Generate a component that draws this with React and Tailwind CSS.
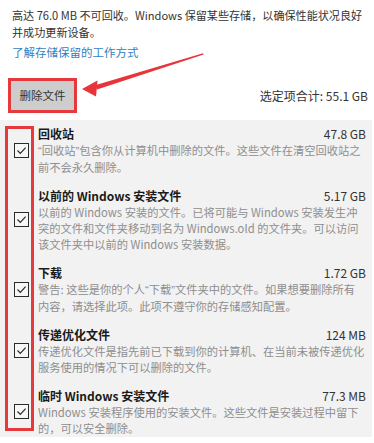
import React from "react";

const items = [
  {
    title: "回收站",
    size: "47.8 GB",
    lines: [
      "“回收站”包含你从计算机中删除的文件。这些文件在清空回收站之",
      "前不会永久删除。",
    ],
  },
  {
    title: "以前的 Windows 安装文件",
    size: "5.17 GB",
    lines: [
      "以前的 Windows 安装的文件。已将可能与 Windows 安装发生冲",
      "突的文件和文件夹移动到名为 Windows.old 的文件夹。可以访问",
      "该文件夹中以前的 Windows 安装数据。",
    ],
  },
  {
    title: "下载",
    size: "1.72 GB",
    lines: [
      "警告: 这些是你的个人“下载”文件夹中的文件。如果想要删除所有",
      "内容，请选择此项。此项不遵守你的存储感知配置。",
    ],
  },
  {
    title: "传递优化文件",
    size: "124 MB",
    lines: [
      "传递优化文件是指先前已下载到你的计算机、在当前未被传递优化",
      "服务使用的情况下可以删除的文件。",
    ],
  },
  {
    title: "临时 Windows 安装文件",
    size: "77.3 MB",
    lines: [
      "Windows 安装程序使用的安装文件。这些文件是安装过程中留下",
      "的，可以安全删除。",
    ],
  },
];

// narrow western quotes instead of the full-width CJK ones
const withQuotes = (text) =>
  text.split(/([“”])/).map((part, i) =>
    part === "“" || part === "”" ? (
      <span key={i} className="font-['Liberation_Sans',sans-serif]">
        {part}
      </span>
    ) : (
      part
    )
  );

const CheckBox = () => (
  <div className="w-[15px] h-[15px] shrink-0 border-[1.5px] border-[#2b2b2b] bg-[#f7f7f7] flex items-center justify-center">
    <svg width="11" height="11" viewBox="0 0 11 11" fill="none">
      <path d="M1.5 5.5 L4.3 8.3 L9.6 2.6" stroke="#2b2b2b" strokeWidth="1.2" />
    </svg>
  </div>
);

export default function App() {
  return (
    <div className="relative w-[374px] h-[443px] overflow-hidden bg-white font-['Noto_Sans_CJK_SC',sans-serif]">
      {/* Intro */}
      <div className="px-3 pt-[7px]">
        <p className="text-[11.1px] leading-[17px] text-[#333] whitespace-nowrap">
          高达 76.0 MB 不可回收。Windows 保留某些存储，以确保性能状况良好
          <br />
          并成功更新设备。
        </p>
        <p className="mt-[3px] text-[11.5px] leading-[17px] text-[#2f7fc1]">
          了解存储保留的工作方式
        </p>
      </div>

      {/* Action row */}
      <div className="mt-[17px] flex items-center justify-between pl-2 pr-[6px]">
        <div className="border-[3px] border-[#e5393d]">
          <button className="w-[63px] h-[29px] bg-[#cdcdcd] text-[11.5px] text-[#333] flex items-center justify-center">
            删除文件
          </button>
        </div>
        <span className="text-[12px] text-[#333]">选定项合计: 55.1 GB</span>
      </div>

      {/* Items panel */}
      <div className="mt-[7px] mr-[2px] h-[317px] bg-[#f2f2f2] pt-[5px] flex flex-col gap-3">
        {items.map((it) => (
          <div key={it.title} className="flex items-center pl-[14px] pr-[6px]">
            <CheckBox />
            <div className="ml-[9px] flex-1 min-w-0">
              <div className="flex justify-between leading-[17px] text-[12px]">
                <span className="font-bold text-[#1a1a1a]">{it.title}</span>
                <span className="text-[#333]">{it.size}</span>
              </div>
              <div className="text-[11.25px] leading-[16px] text-[#8e8e8e]">
                {it.lines.map((l) => (
                  <div key={l} className="whitespace-nowrap">
                    {withQuotes(l)}
                  </div>
                ))}
              </div>
            </div>
          </div>
        ))}
      </div>

      {/* Annotation: red frame around checkboxes */}
      <div className="absolute left-[5px] top-[126px] w-[29px] h-[305px] border-[3px] border-[#e5393d]" />

      {/* Annotation: arrow */}
      <svg
        className="absolute left-0 top-0"
        width="374"
        height="120"
        viewBox="0 0 374 120"
      >
        <polygon
          points="203,53.2 203.6,54.4 97,89.4 95,85.2"
          fill="#e8343b"
        />
        <polygon points="82,89 97.5,80.5 96,96.5" fill="#e8343b" />
      </svg>
    </div>
  );
}
